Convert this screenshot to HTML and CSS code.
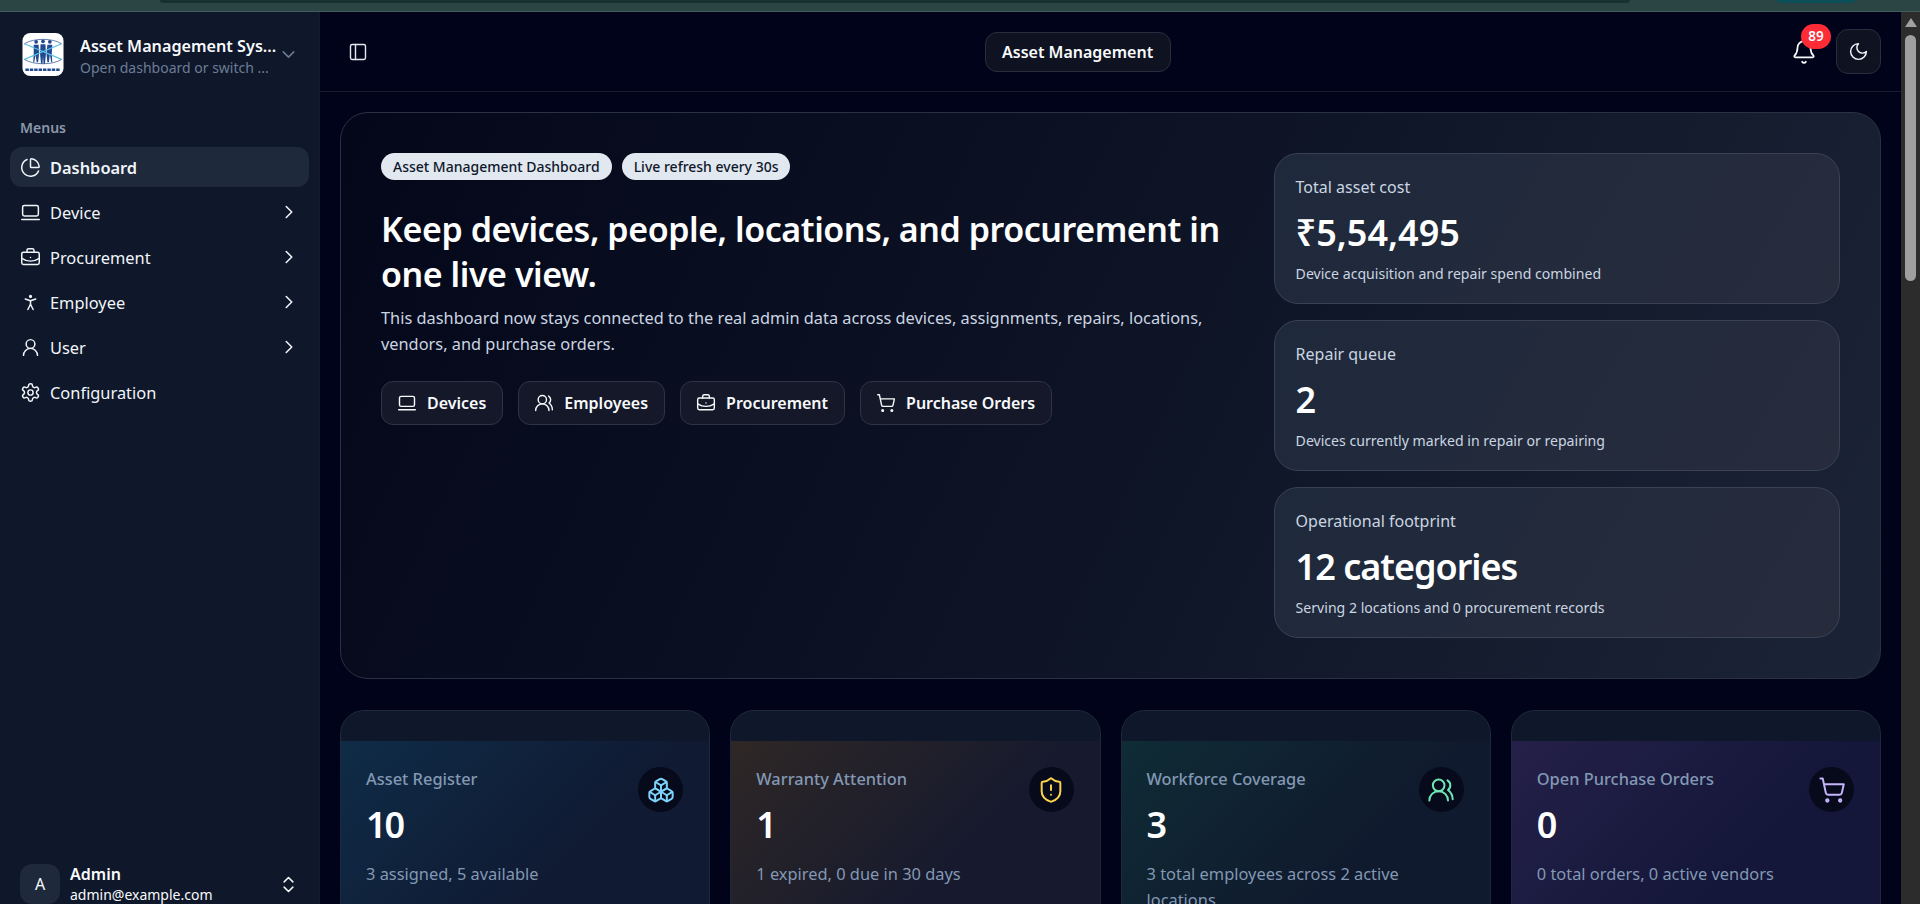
FILE: index.html
```html
<!doctype html>
<html lang="en">
  <head>
    <meta charset="UTF-8" />
    <meta name="viewport" content="width=device-width, initial-scale=1.0" />
    <title>Asset Management Dashboard</title>
    <link rel="stylesheet" href="styles.css">
  </head>
  <body>
    <svg class="sprite" aria-hidden="true">
      <symbol id="i-pie" viewBox="0 0 24 24"><path d="M21 12c.552 0 1.005-.449.95-.998a10 10 0 0 0-8.953-8.951c-.55-.055-.998.398-.998.95v8a1 1 0 0 0 1 1z"/><path d="M21.21 15.89A10 10 0 1 1 8 2.83"/></symbol>
      <symbol id="i-laptop" viewBox="0 0 24 24"><rect x="3" y="4" width="18" height="12" rx="2"/><path d="M2 20h20"/></symbol>
      <symbol id="i-briefcase" viewBox="0 0 24 24"><path d="M12 12h.01"/><path d="M16 6V4a2 2 0 0 0-2-2h-4a2 2 0 0 0-2 2v2"/><path d="M22 13a18.15 18.15 0 0 1-20 0"/><rect x="2" y="6" width="20" height="14" rx="2"/></symbol>
      <symbol id="i-person" viewBox="0 0 24 24"><circle cx="12" cy="5" r="1"/><path d="m9 20 3-6 3 6"/><path d="m6 8 6 2 6-2"/><path d="M12 10v4"/></symbol>
      <symbol id="i-user" viewBox="0 0 24 24"><circle cx="12" cy="8" r="5"/><path d="M20 21a8 8 0 0 0-16 0"/></symbol>
      <symbol id="i-settings" viewBox="0 0 24 24"><path d="M12.22 2h-.44a2 2 0 0 0-2 2v.18a2 2 0 0 1-1 1.73l-.43.25a2 2 0 0 1-2 0l-.15-.08a2 2 0 0 0-2.73.73l-.22.38a2 2 0 0 0 .73 2.73l.15.1a2 2 0 0 1 1 1.72v.51a2 2 0 0 1-1 1.74l-.15.09a2 2 0 0 0-.73 2.73l.22.38a2 2 0 0 0 2.73.73l.15-.08a2 2 0 0 1 2 0l.43.25a2 2 0 0 1 1 1.73V20a2 2 0 0 0 2 2h.44a2 2 0 0 0 2-2v-.18a2 2 0 0 1 1-1.73l.43-.25a2 2 0 0 1 2 0l.15.08a2 2 0 0 0 2.73-.73l.22-.39a2 2 0 0 0-.73-2.73l-.15-.08a2 2 0 0 1-1-1.74v-.5a2 2 0 0 1 1-1.74l.15-.09a2 2 0 0 0 .73-2.73l-.22-.38a2 2 0 0 0-2.73-.73l-.15.08a2 2 0 0 1-2 0l-.43-.25a2 2 0 0 1-1-1.73V4a2 2 0 0 0-2-2z"/><circle cx="12" cy="12" r="3"/></symbol>
      <symbol id="i-users" viewBox="0 0 24 24"><path d="M18 21a8 8 0 0 0-16 0"/><circle cx="10" cy="8" r="5"/><path d="M22 20c0-3.37-2-6.5-4-8a5 5 0 0 0-.45-8.3"/></symbol>
      <symbol id="i-cart" viewBox="0 0 24 24"><circle cx="8" cy="21" r="1"/><circle cx="19" cy="21" r="1"/><path d="M2.05 2.05h2l2.66 12.42a2 2 0 0 0 2 1.58h9.78a2 2 0 0 0 1.95-1.57l1.65-7.43H5.12"/></symbol>
      <symbol id="i-shield" viewBox="0 0 24 24"><path d="M20 13c0 5-3.5 7.5-7.66 8.95a1 1 0 0 1-.67-.01C7.5 20.5 4 18 4 13V6a1 1 0 0 1 1-1c2 0 4.5-1.2 6.24-2.72a1.17 1.17 0 0 1 1.52 0C14.51 3.81 17 5 19 5a1 1 0 0 1 1 1z"/><path d="M12 8v4"/><path d="M12 16h.01"/></symbol>
      <symbol id="i-boxes" viewBox="0 0 24 24"><path d="M2.97 12.92A2 2 0 0 0 2 14.63v3.24a2 2 0 0 0 .97 1.71l3 1.8a2 2 0 0 0 2.06 0L12 19v-5.5l-5-3-4.03 2.42Z"/><path d="m7 16.5-4.74-2.85"/><path d="m7 16.5 5-3"/><path d="M7 16.5v5.17"/><path d="M12 13.5V19l3.97 2.38a2 2 0 0 0 2.06 0l3-1.8a2 2 0 0 0 .97-1.71v-3.24a2 2 0 0 0-.97-1.71L17 10.5l-5 3Z"/><path d="m17 16.5-5-3"/><path d="m17 16.5 4.74-2.85"/><path d="M17 16.5v5.17"/><path d="M7.97 4.42A2 2 0 0 0 7 6.13v4.37l5 3 5-3V6.13a2 2 0 0 0-.97-1.71l-3-1.8a2 2 0 0 0-2.06 0l-3 1.8Z"/><path d="M12 8 7.26 5.15"/><path d="m12 8 4.74-2.85"/><path d="M12 13.5V8"/></symbol>
      <symbol id="i-bell" viewBox="0 0 24 24"><path d="M10.268 21a2 2 0 0 0 3.464 0"/><path d="M3.262 15.326A1 1 0 0 0 4 17h16a1 1 0 0 0 .74-1.673C19.41 13.956 18 12.499 18 8A6 6 0 0 0 6 8c0 4.499-1.411 5.956-2.738 7.326"/></symbol>
      <symbol id="i-moon" viewBox="0 0 24 24"><path d="M12 3a6 6 0 0 0 9 9 9 9 0 1 1-9-9Z"/></symbol>
      <symbol id="i-panel" viewBox="0 0 24 24"><rect x="3" y="3" width="18" height="18" rx="2"/><path d="M9 3v18"/></symbol>
      <symbol id="i-right" viewBox="0 0 24 24"><path d="m9 18 6-6-6-6"/></symbol>
      <symbol id="i-down" viewBox="0 0 24 24"><path d="m6 9 6 6 6-6"/></symbol>
      <symbol id="i-updown" viewBox="0 0 24 24"><path d="m7 15 5 5 5-5"/><path d="m7 9 5-5 5 5"/></symbol>
    </svg>

    <div class="browser-strip">
      <div class="strip-bar"></div>
      <div class="strip-tab"></div>
    </div>

    <div class="app">
      <aside class="sidebar">
        <div class="brand">
          <svg class="brand-logo" viewBox="0 0 42 44">
            <rect width="42" height="44" rx="8" fill="#fff"/>
            <g fill="#21498f">
              <circle cx="14" cy="9" r="1.9"/><circle cx="21" cy="8.5" r="1.9"/><circle cx="28" cy="9" r="1.9"/>
              <path d="M11.5 12h5l.5 9-1 9h-1.5l-1-8-1.500 8h-1l.5-9z"/>
              <path d="M18.500 11.500h5l.5 10-1 10h-1.500l-.5-8-.5 8h-1.500l-1-10z"/>
              <path d="M25.500 12h5l-.5 9 .5 9h-1l-1.500-8-1 8h-1.500l-1-9z"/>
            </g>
            <path d="M2 11 40 27M40 11 2 27" stroke="#5cc0e8" stroke-width="1.2"/>
            <path d="M2 27c9 6 29 6 38 0M2 11c9-6 29-6 38 0" stroke="#21498f" stroke-width=".7" fill="none"/>
            <path d="M3 37.500h36" stroke="#21498f" stroke-width="2.600" stroke-dasharray="3.500 1"/>
          </svg>
          <div class="brand-text">
            <div class="brand-name">Asset Management Sys...</div>
            <div class="brand-sub">Open dashboard or switch ...</div>
          </div>
          <svg class="icon icon-muted"><use href="#i-down"/></svg>
        </div>

        <div class="menu-label">Menus</div>
        <nav class="menu">
          <a class="menu-item active"><svg class="icon"><use href="#i-pie"/></svg><span>Dashboard</span></a>
          <a class="menu-item"><svg class="icon"><use href="#i-laptop"/></svg><span>Device</span><svg class="icon chev"><use href="#i-right"/></svg></a>
          <a class="menu-item"><svg class="icon"><use href="#i-briefcase"/></svg><span>Procurement</span><svg class="icon chev"><use href="#i-right"/></svg></a>
          <a class="menu-item"><svg class="icon"><use href="#i-person"/></svg><span>Employee</span><svg class="icon chev"><use href="#i-right"/></svg></a>
          <a class="menu-item"><svg class="icon"><use href="#i-user"/></svg><span>User</span><svg class="icon chev"><use href="#i-right"/></svg></a>
          <a class="menu-item"><svg class="icon"><use href="#i-settings"/></svg><span>Configuration</span></a>
        </nav>

        <div class="account">
          <div class="avatar">A</div>
          <div class="account-text">
            <div class="account-name">Admin</div>
            <div class="account-mail">admin@example.com</div>
          </div>
          <svg class="icon"><use href="#i-updown"/></svg>
        </div>
      </aside>

      <div class="content">
        <header class="topbar">
          <svg class="icon icon-panel"><use href="#i-panel"/></svg>
          <div class="topbar-title">Asset Management</div>
          <div class="topbar-actions">
            <div class="bell">
              <svg class="icon icon-bell"><use href="#i-bell"/></svg>
              <span class="bell-badge">89</span>
            </div>
            <button class="theme-btn"><svg class="icon"><use href="#i-moon"/></svg></button>
          </div>
        </header>

        <main class="page">
          <section class="hero">
            <div class="hero-left">
              <div class="chips">
                <span class="chip">Asset Management Dashboard</span>
                <span class="chip">Live refresh every 30s</span>
              </div>
              <h1>Keep devices, people, locations, and procurement in one live view.</h1>
              <p>This dashboard now stays connected to the real admin data across devices, assignments, repairs, locations, vendors, and purchase orders.</p>
              <div class="hero-links">
                <a class="hero-link"><svg class="icon"><use href="#i-laptop"/></svg>Devices</a>
                <a class="hero-link"><svg class="icon"><use href="#i-users"/></svg>Employees</a>
                <a class="hero-link"><svg class="icon"><use href="#i-briefcase"/></svg>Procurement</a>
                <a class="hero-link"><svg class="icon"><use href="#i-cart"/></svg>Purchase Orders</a>
              </div>
            </div>
            <div class="hero-stats">
              <div class="stat">
                <div class="stat-label">Total asset cost</div>
                <div class="stat-value">₹5,54,495</div>
                <div class="stat-note">Device acquisition and repair spend combined</div>
              </div>
              <div class="stat">
                <div class="stat-label">Repair queue</div>
                <div class="stat-value">2</div>
                <div class="stat-note">Devices currently marked in repair or repairing</div>
              </div>
              <div class="stat">
                <div class="stat-label">Operational footprint</div>
                <div class="stat-value stat-value-words">12 categories</div>
                <div class="stat-note">Serving 2 locations and 0 procurement records</div>
              </div>
            </div>
          </section>

          <section class="cards">
            <article class="card">
              <div class="card-body card-blue">
                <div class="card-text">
                  <div class="card-label">Asset Register</div>
                  <div class="card-value">10</div>
                  <div class="card-note">3 assigned, 5 available</div>
                </div>
                <div class="card-icon icon-blue"><svg class="icon"><use href="#i-boxes"/></svg></div>
              </div>
            </article>
            <article class="card">
              <div class="card-body card-amber">
                <div class="card-text">
                  <div class="card-label">Warranty Attention</div>
                  <div class="card-value">1</div>
                  <div class="card-note">1 expired, 0 due in 30 days</div>
                </div>
                <div class="card-icon icon-amber"><svg class="icon"><use href="#i-shield"/></svg></div>
              </div>
            </article>
            <article class="card">
              <div class="card-body card-teal">
                <div class="card-text">
                  <div class="card-label">Workforce Coverage</div>
                  <div class="card-value">3</div>
                  <div class="card-note">3 total employees across 2 active locations</div>
                </div>
                <div class="card-icon icon-teal"><svg class="icon"><use href="#i-users"/></svg></div>
              </div>
            </article>
            <article class="card">
              <div class="card-body card-violet">
                <div class="card-text">
                  <div class="card-label">Open Purchase Orders</div>
                  <div class="card-value">0</div>
                  <div class="card-note">0 total orders, 0 active vendors</div>
                </div>
                <div class="card-icon icon-violet"><svg class="icon"><use href="#i-cart"/></svg></div>
              </div>
            </article>
          </section>
        </main>
      </div>

      <div class="scrollbar">
        <div class="scroll-arrow"></div>
        <div class="scroll-thumb"></div>
      </div>
    </div>
  </body>
</html>
```

FILE: styles.css
```css
* {
  box-sizing: border-box;
}

html,
body {
  height: 100%;
}

body {
  margin: 0;
  overflow: hidden;
  display: flex;
  flex-direction: column;
  font-family: "Noto Sans", "Open Sans", sans-serif;
  background-color: #01031a;
  color: #f8fafc;
}

.sprite {
  display: none;
}

.icon {
  width: 21px;
  height: 21px;
  flex-shrink: 0;
  fill: none;
  stroke: currentColor;
  stroke-width: 1.7;
  stroke-linecap: round;
  stroke-linejoin: round;
}

.icon-muted {
  color: #6b7d96;
}

/* strip of the browser window above the page */
.browser-strip {
  height: 12px;
  flex-shrink: 0;
  display: flex;
  background-color: #2b4444;
  border-bottom: 1px solid #455c5c;
}

.strip-bar {
  width: 1470px;
  height: 3px;
  margin-left: 160px;
  background-color: #173030;
  border-radius: 0 0 10px 10px;
}

.strip-tab {
  width: 78px;
  height: 3px;
  margin-left: 147px;
  background-color: #0b5058;
  border-radius: 0 0 10px 10px;
}

.app {
  flex: 1;
  min-height: 0;
  display: flex;
}

/* sidebar */
.sidebar {
  width: 320px;
  flex-shrink: 0;
  display: flex;
  flex-direction: column;
  background-color: #0f172a;
  border-right: 1px solid #141b2d;
}

.brand {
  display: flex;
  align-items: center;
  gap: 16px;
  padding: 19px 20px 0 22px;
}

.brand-logo {
  width: 42px;
  height: 43px;
  flex-shrink: 0;
}

.brand-text {
  flex: 1;
  min-width: 0;
  margin-top: 4px;
  white-space: nowrap;
}

.brand-name {
  font-size: 16.2px;
  line-height: 22px;
  font-weight: 600;
}

.brand-sub {
  font-size: 14px;
  line-height: 21px;
  color: #6b7d96;
}

.menu-label {
  margin: 40px 0 0 20px;
  font-size: 14px;
  line-height: 20px;
  font-weight: 600;
  color: #8b97a8;
}

.menu {
  display: flex;
  flex-direction: column;
  gap: 5px;
  padding: 9px 10px 0;
}

.menu-item {
  height: 40px;
  display: flex;
  align-items: center;
  gap: 9px;
  padding: 0 9px 0 10px;
  border-radius: 12px;
  font-size: 16.4px;
  color: #f1f5f9;
}

.menu-item span {
  flex: 1;
  padding-top: 1px;
}

.menu-item .chev {
  width: 22px;
  height: 22px;
}

.menu-item.active {
  background-color: #1e293b;
  font-weight: 600;
}

.account {
  margin-top: auto;
  display: flex;
  align-items: center;
  gap: 10px;
  padding: 0 20px 0 20px;
}

.avatar {
  width: 40px;
  height: 40px;
  display: flex;
  align-items: center;
  justify-content: center;
  border-radius: 12px;
  background-color: #1e293b;
  font-size: 16px;
}

.account-text {
  flex: 1;
}

.account-name {
  font-size: 16px;
  line-height: 21px;
  font-weight: 600;
}

.account-mail {
  font-size: 14px;
  line-height: 19px;
}

/* top bar */
.content {
  flex: 1;
  min-width: 0;
  display: flex;
  flex-direction: column;
}

.topbar {
  height: 80px;
  flex-shrink: 0;
  display: flex;
  align-items: center;
  padding: 0 20px 0 28px;
  border-bottom: 1px solid #1a1d2e;
}

.icon-panel {
  width: 20px;
  height: 20px;
  color: #e2e8f0;
}

.topbar-title {
  margin-left: 617px;
  padding: 0 17px 0 16px;
  height: 40px;
  display: flex;
  align-items: center;
  border: 1px solid #2a2d3d;
  border-radius: 12px;
  background-color: #0f1220;
  font-size: 16px;
  font-weight: 600;
}

.topbar-actions {
  margin-left: auto;
  display: flex;
  align-items: center;
  gap: 19px;
}

.bell {
  position: relative;
  display: flex;
}

.icon-bell {
  width: 26px;
  height: 26px;
  stroke-width: 1.6;
}

.bell-badge {
  position: absolute;
  top: -15px;
  left: 10px;
  width: 30px;
  height: 25px;
  display: flex;
  align-items: center;
  justify-content: center;
  border-radius: 13px;
  background-color: #fb2c36;
  font-size: 13.5px;
  font-weight: 600;
}

.theme-btn {
  width: 45px;
  height: 45px;
  display: flex;
  align-items: center;
  justify-content: center;
  padding: 0;
  border: 1px solid #2a2d3d;
  border-radius: 12px;
  background-color: #0f1220;
  color: #f1f5f9;
}

.page {
  flex: 1;
  min-height: 0;
  overflow: hidden;
  padding: 20px;
}

/* hero */
.hero {
  display: grid;
  grid-template-columns: 1.5fr 1fr;
  gap: 43px;
  padding: 40px;
  border: 1px solid #2a3142;
  border-radius: 28px;
  background: linear-gradient(115deg, #030719 0%, #0f1628 58%, #1b2436 100%);
}

.chips {
  display: flex;
  gap: 10px;
}

.chip {
  height: 27px;
  display: flex;
  align-items: center;
  padding: 0 12px;
  border-radius: 14px;
  background-color: #e2e8f0;
  color: #0f172a;
  font-size: 14px;
  font-weight: 500;
}

.hero h1 {
  margin: 27px 0 0;
  font-size: 34px;
  line-height: 45px;
  font-weight: 600;
  letter-spacing: -0.45px;
  color: #fff;
}

.hero p {
  margin: 8px 0 0;
  font-size: 16.35px;
  line-height: 26px;
  color: #cbd5e1;
}

.hero-links {
  display: flex;
  gap: 15px;
  margin-top: 24px;
}

.hero-link {
  height: 44px;
  display: flex;
  align-items: center;
  gap: 10px;
  padding: 0 16px 0 15px;
  border: 1px solid #2f3444;
  border-radius: 12px;
  background-color: #141829;
  font-size: 16px;
  font-weight: 600;
}

.hero-link .icon {
  width: 20px;
  height: 20px;
}

.hero-stats {
  display: flex;
  flex-direction: column;
  gap: 16px;
}

.stat {
  height: 151px;
  padding: 21px;
  border: 1px solid #3a4150;
  border-radius: 24px;
  background: linear-gradient(120deg, #1e293b 0%, #272c3d 100%);
}

.stat-label {
  font-size: 16px;
  line-height: 24px;
  color: #cbd5e1;
}

.stat-value {
  margin-top: 9px;
  font-size: 36px;
  line-height: 50px;
  font-weight: 600;
  color: #fff;
}

.stat-value-words {
  letter-spacing: -1px;
}

.stat-note {
  margin-top: 6px;
  font-size: 14.1px;
  line-height: 20px;
  color: #cbd5e1;
}

/* metric cards */
.cards {
  display: grid;
  grid-template-columns: repeat(4, 1fr);
  gap: 20px;
  margin-top: 31px;
}

.card {
  padding-top: 30px;
  border: 1px solid #1e293b;
  border-radius: 24px;
  background-color: #0f172a;
  overflow: hidden;
}

.card-body {
  display: flex;
  align-items: flex-start;
  justify-content: space-between;
  gap: 16px;
  padding: 26px 26px 30px 25px;
  min-height: 200px;
}

.card-blue {
  background: linear-gradient(135deg, #0f2c47 0%, #101a33 60%);
}

.card-amber {
  background: linear-gradient(135deg, #2e2725 0%, #171a2e 60%);
}

.card-teal {
  background: linear-gradient(135deg, #0f2c35 0%, #101a2e 60%);
}

.card-violet {
  background: linear-gradient(135deg, #252049 0%, #14173a 60%);
}

.card-label {
  font-size: 16.4px;
  line-height: 24px;
  font-weight: 500;
  color: #8398b3;
}

.card-value {
  margin-top: 10px;
  font-size: 36px;
  line-height: 48px;
  font-weight: 600;
  letter-spacing: -2px;
  color: #fff;
}

.card-note {
  margin-top: 12px;
  font-size: 16.4px;
  line-height: 26px;
  color: #8398b3;
}

.card-icon {
  width: 45px;
  height: 45px;
  flex-shrink: 0;
  display: flex;
  align-items: center;
  justify-content: center;
  border-radius: 50%;
  background-color: #060a1a;
}

.card-icon .icon {
  width: 28px;
  height: 28px;
  stroke-width: 1.7;
}

.icon-blue {
  color: #7dd3fc;
}

.icon-amber {
  color: #fcd34d;
}

.icon-teal {
  color: #6ee7b7;
}

.icon-violet {
  color: #c4b5fd;
}

/* window scrollbar */
.scrollbar {
  width: 19px;
  flex-shrink: 0;
  background-color: #2c2c2c;
}

.scroll-arrow {
  width: 0;
  height: 0;
  margin: 6px auto 0;
  border-left: 6px solid transparent;
  border-right: 6px solid transparent;
  border-bottom: 9px solid #a0a0a0;
}

.scroll-thumb {
  width: 11px;
  height: 246px;
  margin: 8px auto 0;
  border-radius: 6px;
  background-color: #9f9f9f;
}
```
